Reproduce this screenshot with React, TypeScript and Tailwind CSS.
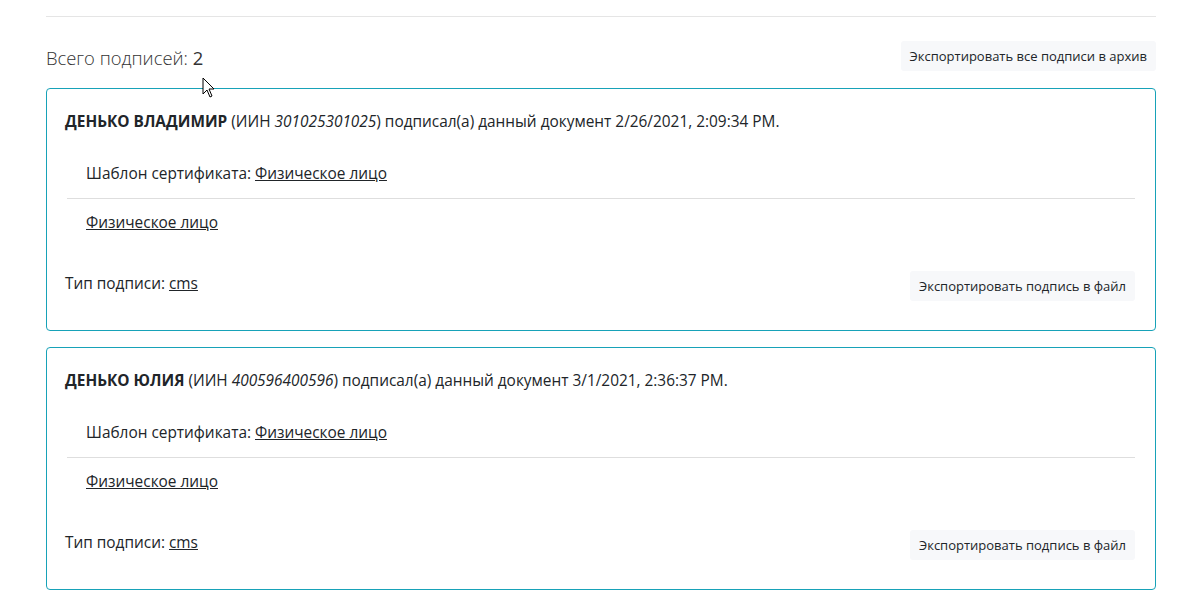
import { FC } from 'react'

interface ISignature {
  name: string
  iin: string
  date: string
}

const signatures: ISignature[] = [
  { name: `ДЕНЬКО ВЛАДИМИР`, iin: `301025301025`, date: `2/26/2021, 2:09:34 PM` },
  { name: `ДЕНЬКО ЮЛИЯ`, iin: `400596400596`, date: `3/1/2021, 2:36:37 PM` },
]

const ExportButton: FC<{ label: string }> = ({ label }) => (
  <button
    type="button"
    className="h-[30px] rounded-[3px] bg-[#f7f8fa] px-[9px] text-[13px] leading-[30px] text-[#212529]"
  >
    {label}
  </button>
)

const SignatureCard: FC<{ signature: ISignature }> = ({ signature }) => (
  <div className="rounded-[4px] border border-[#17a2b8] pl-[18px] pr-5 pt-[22px] pb-[29px]">
    <p className="leading-[22px]">
      <b className="font-bold">{signature.name}</b> (ИИН{` `}
      <i>{signature.iin}</i>) подписал(а) данный документ {signature.date}.
    </p>
    <ul className="mt-[17px] ml-[2px]">
      <li className="px-[19px] py-[13px] leading-[22px]">
        Шаблон сертификата: <a className="underline">Физическое лицо</a>
      </li>
      <li className="border-t border-[#dedede] px-[19px] py-[13px] leading-[22px]">
        <a className="underline">Физическое лицо</a>
      </li>
    </ul>
    <div className="mt-[24px] flex items-center justify-between">
      <p className="mt-[-4px] leading-[22px]">
        Тип подписи: <a className="underline">cms</a>
      </p>
      <ExportButton label="Экспортировать подпись в файл" />
    </div>
  </div>
)

export default function App() {
  return (
    <div
      className="relative h-[600px] w-[1200px] overflow-hidden bg-white text-[15.4px] text-[#212529]"
      style={{ fontFamily: `"Open Sans", "Noto Sans", sans-serif` }}
    >
      <div className="ml-[46px] w-[1110px] pt-4">
        <hr className="border-[#e5e5e5]" />
        <div className="mt-[24px] flex items-start justify-between">
          <h2 className="mt-[3px] text-[18.4px] leading-[28px] font-light text-[#333]">
            Всего подписей: <span className="font-normal">2</span>
          </h2>
          <ExportButton label="Экспортировать все подписи в архив" />
        </div>
        <div className="mt-[16px] flex flex-col gap-4">
          {signatures.map((s) => (
            <SignatureCard key={s.iin} signature={s} />
          ))}
        </div>
      </div>
      {/* mouse pointer from the capture */}
      <svg
        className="absolute left-[202px] top-[77px]"
        width="14"
        height="22"
        viewBox="0 0 14 22"
      >
        <path
          d="M1 1 L1 17 L5 13 L8 20 L10 19 L7 12 L12 12 Z"
          fill="#fff"
          stroke="#000"
          strokeWidth="1"
          strokeLinejoin="round"
        />
      </svg>
    </div>
  )
}
